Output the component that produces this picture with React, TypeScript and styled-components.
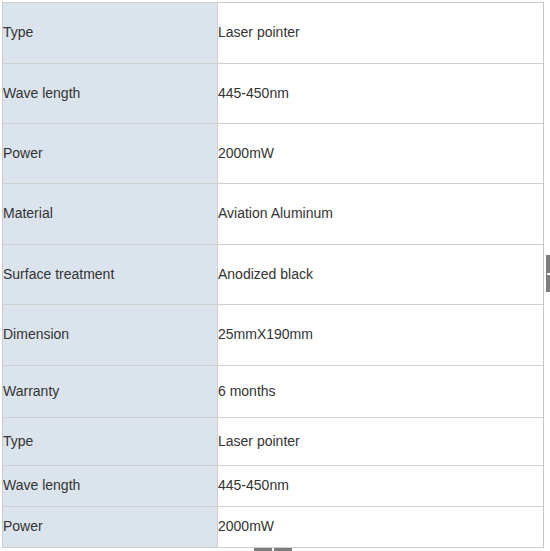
import React from "react";
import styled, { createGlobalStyle } from "styled-components";

const Global = createGlobalStyle`
  html, body { margin: 0; padding: 0; background: #fff; }
  body { font-family: "Liberation Sans", Arial, sans-serif; }
`;

const Page = styled.div`
  position: relative;
  width: 550px;
  height: 551px;
  overflow: hidden;
  padding: 2px 0 0 2px;
  box-sizing: border-box;
`;

const Table = styled.div`
  width: 542px;
  border-top: 1px solid #cbcbcb;
  border-left: 1px solid #cbcbcb;
  border-right: 1px solid #c4c4c4;
  box-sizing: border-box;
`;

const Row = styled.div<{ $h: number }>`
  display: grid;
  grid-template-columns: 215px 1fr;
  height: ${(p) => p.$h}px;
  border-bottom: 1px solid #d0d0d0;
  box-sizing: border-box;
`;

const Label = styled.div`
  background: #dbe3ed;
  border-right: 1px solid #cfcfcf;
  display: flex;
  align-items: center;
  padding-bottom: 2px;
  box-sizing: border-box;
  font-size: 14px;
  color: #333;
`;

const Value = styled.div`
  display: flex;
  align-items: center;
  padding-bottom: 2px;
  box-sizing: border-box;
  font-size: 14px;
  color: #333;
`;

const SideTab = styled.div`
  position: absolute;
  right: 0;
  top: 255px;
  width: 4px;
  height: 37px;
  background: #7d7d7d;
  &::after {
    content: "";
    position: absolute;
    left: 1px;
    top: 18px;
    width: 3px;
    height: 2px;
    background: #fff;
  }
`;

const BottomTabs = styled.div`
  position: absolute;
  left: 254px;
  top: 548px;
  display: flex;
  gap: 2px;
`;

const BottomTab = styled.div`
  width: 18px;
  height: 3px;
  background: #7d7d7d;
`;

const rows: [string, string, number][] = [
  ["Type", "Laser pointer", 61],
  ["Wave length", "445-450nm", 60],
  ["Power", "2000mW", 60],
  ["Material", "Aviation Aluminum", 61],
  ["Surface treatment", "Anodized black", 60],
  ["Dimension", "25mmX190mm", 61],
  ["Warranty", "6 months", 52],
  ["Type", "Laser pointer", 48],
  ["Wave length", "445-450nm", 41],
  ["Power", "2000mW", 41],
];

export default function App() {
  return (
    <>
      <Global />
      <Page>
        <Table>
          {rows.map(([k, v, h], i) => (
            <Row key={i} $h={h}>
              <Label>{k}</Label>
              <Value>{v}</Value>
            </Row>
          ))}
        </Table>
        <SideTab />
        <BottomTabs>
          <BottomTab />
          <BottomTab />
        </BottomTabs>
      </Page>
    </>
  );
}
